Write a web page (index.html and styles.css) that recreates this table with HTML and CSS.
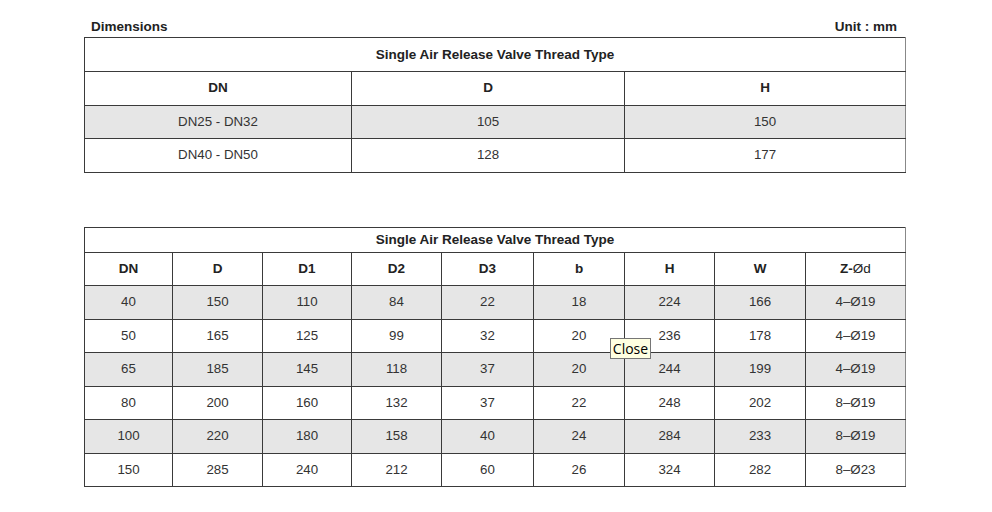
FILE: index.html
```html
<!DOCTYPE html>
<html>
<head>
<meta charset="utf-8">
<link rel="stylesheet" href="styles.css">
</head>
<body>
<div class="page">
  <div class="caption">
    <span>Dimensions</span>
    <span>Unit : mm</span>
  </div>
  <table class="dim t1">
    <colgroup><col style="width:267px"><col style="width:273px"><col></colgroup>
    <tr class="title"><td colspan="3">Single Air Release Valve Thread Type</td></tr>
    <tr class="head"><td>DN</td><td>D</td><td>H</td></tr>
    <tr class="alt"><td>DN25 - DN32</td><td>105</td><td>150</td></tr>
    <tr><td>DN40 - DN50</td><td>128</td><td>177</td></tr>
  </table>

  <div class="wrap2">
  <table class="dim t2">
    <colgroup>
      <col style="width:88px"><col style="width:90px"><col style="width:89px"><col style="width:90px"><col style="width:92px"><col style="width:91px"><col style="width:90px"><col style="width:91px"><col>
    </colgroup>
    <tr class="title small"><td colspan="9">Single Air Release Valve Thread Type</td></tr>
    <tr class="head"><td>DN</td><td>D</td><td>D1</td><td>D2</td><td>D3</td><td>b</td><td>H</td><td>W</td><td>Z-<span class="norm">Ød</span></td></tr>
    <tr class="alt"><td>40</td><td>150</td><td>110</td><td>84</td><td>22</td><td>18</td><td>224</td><td>166</td><td>4–Ø19</td></tr>
    <tr><td>50</td><td>165</td><td>125</td><td>99</td><td>32</td><td>20</td><td>236</td><td>178</td><td>4–Ø19</td></tr>
    <tr class="alt"><td>65</td><td>185</td><td>145</td><td>118</td><td>37</td><td>20</td><td>244</td><td>199</td><td>4–Ø19</td></tr>
    <tr><td>80</td><td>200</td><td>160</td><td>132</td><td>37</td><td>22</td><td>248</td><td>202</td><td>8–Ø19</td></tr>
    <tr class="alt"><td>100</td><td>220</td><td>180</td><td>158</td><td>40</td><td>24</td><td>284</td><td>233</td><td>8–Ø19</td></tr>
    <tr><td>150</td><td>285</td><td>240</td><td>212</td><td>60</td><td>26</td><td>324</td><td>282</td><td>8–Ø23</td></tr>
  </table>
  <div class="tooltip">Close</div>
  </div>
</div>
</body>
</html>
```

FILE: styles.css
```css
html, body {
  margin: 0;
  padding: 0;
  background: #ffffff;
}
body {
  font-family: "Liberation Sans", Arial, sans-serif;
  color: #333333;
  font-size: 13.3px;
}
.page {
  width: 822px;
  margin-left: 84px;
  padding-top: 18px;
}
.caption {
  display: flex;
  justify-content: space-between;
  font-weight: bold;
  font-size: 13.5px;
  line-height: 18px;
  height: 19px;
  padding: 0 9px 0 7px;
  color: #222;
}
.dim {
  border-collapse: collapse;
  table-layout: fixed;
  width: 822px;
}
.dim td {
  border: 1px solid #3a3a3a;
  text-align: center;
  vertical-align: middle;
  padding: 0;
  height: 32.5px;
  line-height: 16px;
}
.dim tr.title td {
  font-weight: bold;
  font-size: 13.5px;
  height: 33px;
  color: #222;
}
.dim tr.title.small td {
  height: 24px;
}
.dim tr.head td {
  font-weight: bold;
  font-size: 13.5px;
  color: #222;
}
.dim tr.alt td {
  background: #e6e6e6;
  border-top-color: #555;
}
.dim td:last-child {
  border-right: 1px solid #888;
}
.norm {
  font-weight: normal;
}
.wrap2 {
  position: relative;
  margin-top: 54px;
}
.tooltip {
  position: absolute;
  left: 526px;
  top: 111px;
  width: 39px;
  height: 19px;
  border: 1px solid #767676;
  background: #ffffe1;
  color: #000;
  font-family: "Open Sans", "DejaVu Sans", sans-serif;
  font-size: 14px;
  line-height: 19px;
  text-align: center;
}
```
